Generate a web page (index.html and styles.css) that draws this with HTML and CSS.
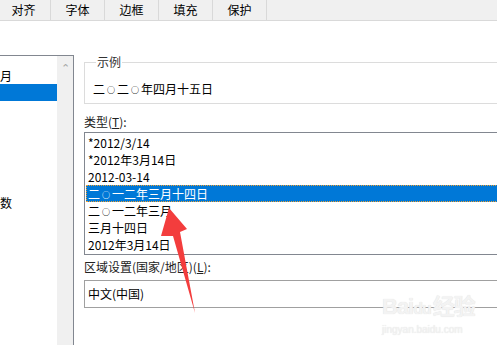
FILE: index.html
```html
<!DOCTYPE html>
<html lang="zh-CN">
<head>
    <meta charset="UTF-8">
    <title>设置单元格格式</title>
    <link rel="stylesheet" href="styles.css">
</head>
<body>
    <div class="tabs">
        <div class="tab first">对齐</div>
        <div class="tab">字体</div>
        <div class="tab">边框</div>
        <div class="tab">填充</div>
        <div class="tab">保护</div>
    </div>
    <div class="main">
        <div class="category">
            <div class="cat-list">
                <div class="cat-item">月</div>
                <div class="cat-item selected"></div>
                <div class="cat-item gap">数</div>
            </div>
            <div class="scrollbar"><span class="up">&#x2303;</span></div>
        </div>
        <div class="options">
            <fieldset class="sample">
                <legend>示例</legend>
                <div class="sample-text">二<span class="o">○</span>二<span class="o">○</span>年四月十五日</div>
            </fieldset>
            <div class="label">类型(<u>T</u>):</div>
            <div class="type-list">
                <div class="type-item">*2012/3/14</div>
                <div class="type-item">*2012年3月14日</div>
                <div class="type-item">2012-03-14</div>
                <div class="type-item selected">二<span class="o">○</span>一二年三月十四日</div>
                <div class="type-item">二<span class="o">○</span>一二年三月</div>
                <div class="type-item">三月十四日</div>
                <div class="type-item">2012年3月14日</div>
            </div>
            <div class="label locale">区域设置(国家/地区)(<u>L</u>):</div>
            <div class="select">中文(中国)</div>
        </div>
    </div>

    <svg class="arrow" width="497" height="345" viewBox="0 0 497 345">
        <polygon points="169,208 187,229 180,232 195,313 173,236 161,236" fill="#f33d3d"/>
    </svg>

    <div class="watermark">
        <div class="wm-logo">Bai<span class="wm-du">du</span>经验</div>
        <div class="wm-url">jingyan.baidu.com</div>
    </div>
</body>
</html>
```

FILE: styles.css
```css
body {
    margin: 0;
    width: 497px;
    height: 345px;
    overflow: hidden;
    position: relative;
    background-color: white;
    font-family: "Noto Sans CJK SC", "Noto Sans", sans-serif;
    font-size: 12px;
    color: #000;
}
.tabs {
    display: flex;
    height: 20px;
    background-color: #f0f0f0;
    border-bottom: 1px solid #d9d9d9;
}
.tab {
    box-sizing: border-box;
    width: 54px;
    line-height: 20px;
    text-align: center;
    border-right: 1px solid #d9d9d9;
    flex-shrink: 0;
}
.tab.first {
    margin-left: -3px;
}
.main {
    display: flex;
    align-items: flex-start;
}
.category {
    display: flex;
    width: 73px;
    height: 300px;
    margin-top: 34px;
    border-top: 1px solid #828790;
    border-right: 1px solid #828790;
    flex-shrink: 0;
}
.cat-list {
    width: 57px;
    padding-top: 11px;
}
.cat-item {
    height: 17px;
    line-height: 17px;
    white-space: nowrap;
}
.cat-item.selected {
    background-color: #0078d7;
}
.cat-item.gap {
    margin-top: 92px;
    line-height: 20px;
}
.scrollbar {
    width: 16px;
    background-color: #f0f0f0;
    text-align: center;
}
.up {
    display: block;
    color: #a6a6a6;
    font-size: 11px;
    margin-top: 6px;
    line-height: 10px;
}
.options {
    width: 430px;
    margin-left: 10px;
    flex-shrink: 0;
}
.sample {
    margin: 33px 0 0 0;
    padding: 11px 0 5px 8px;
    border: 1px solid #dcdcdc;
}
.sample legend {
    padding: 0 1px;
    margin-left: 3px;
    line-height: 16px;
    color: #333;
}
.sample-text {
    line-height: 16px;
}
.o {
    font-size: 8px;
    font-weight: bold;
    margin: 0 2px;
    vertical-align: 1px;
}
.label {
    margin-top: 10px;
    line-height: 16px;
    color: #222;
}
.label u {
    text-underline-offset: 1px;
}
.type-list {
    margin-top: 2px;
    border: 1px solid #828790;
    padding: 1px;
}
.type-item {
    height: 17px;
    line-height: 17px;
    padding-left: 2px;
    white-space: nowrap;
}
.type-item.selected {
    background-color: #0078d7;
    color: white;
    outline: 1px dotted #f0a030;
    outline-offset: -1px;
}
.label.locale {
    margin-top: 4px;
}
.select {
    margin-top: 5px;
    height: 26px;
    line-height: 26px;
    border: 1px solid #a0a0a0;
    padding-left: 3px;
}
.arrow {
    position: absolute;
    left: 0;
    top: 0;
}
.watermark {
    position: absolute;
    left: 382px;
    top: 294px;
    color: #f3f3f3;
    font-family: "Liberation Sans", "Noto Sans CJK SC", sans-serif;
    text-shadow: 0 0 1px #dadada;
}
.wm-logo {
    font-size: 22px;
    font-weight: bold;
    line-height: 26px;
    letter-spacing: -1px;
}
.wm-du {
    font-size: 16px;
    margin-right: 2px;
}
.wm-url {
    font-size: 10px;
    line-height: 12px;
    margin-top: 2px;
}
```
